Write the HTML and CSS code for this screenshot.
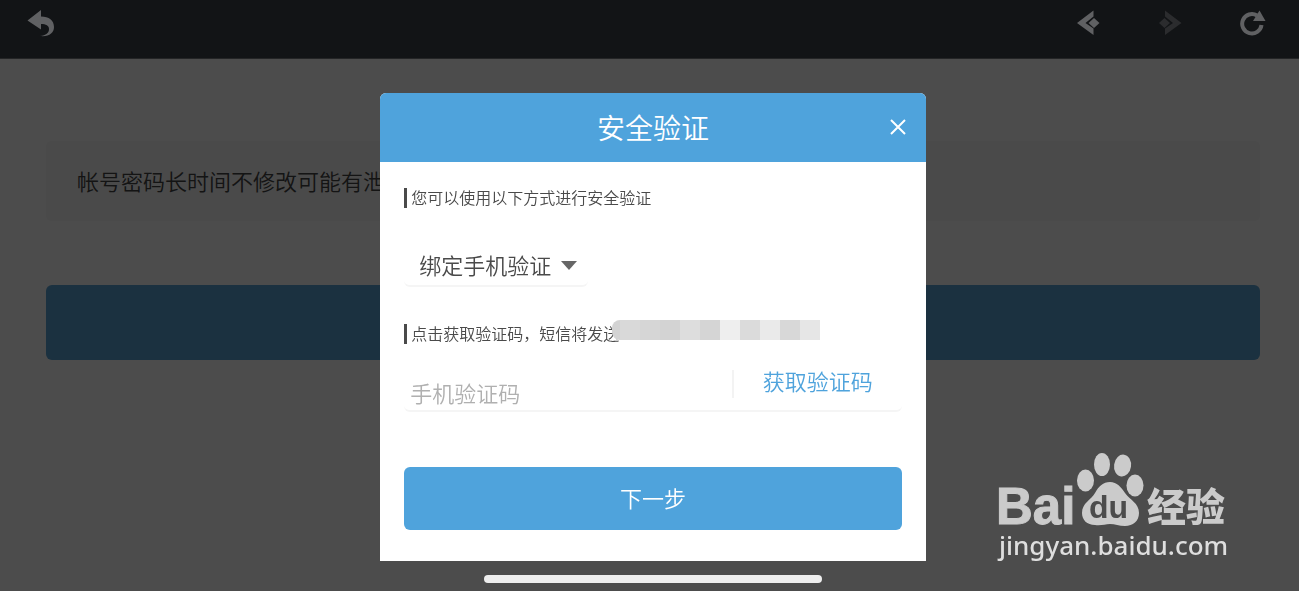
FILE: index.html
```html
<!DOCTYPE html>
<html lang="zh-CN">
<head>
  <meta charset="UTF-8">
  <meta name="viewport" content="width=device-width, initial-scale=1.0">
  <title>安全验证</title>
  <link rel="stylesheet" href="styles.css">
</head>
<body>
  <header class="topbar">
    <button class="icon-btn" type="button" aria-label="返回">
      <svg width="28" height="28" viewBox="0 0 28 28">
        <path d="M0.500 10.500L14 0V6.500C22 6.500 27 10.500 27 17C27 23 22 27 13 26C19 25.500 22 23 22 19C22 15.500 19 14 14 14V19.500Z"/>
      </svg>
    </button>
    <nav class="topbar-nav">
      <button class="icon-btn" type="button" aria-label="后退">
        <svg width="24" height="26" viewBox="0 0 24 26">
          <path d="M17.500 0.500V6.500L9.500 13L17.500 18.500V25L1 13Z"/>
          <path d="M18 8L23.500 13L18 18L12.500 13Z"/>
        </svg>
      </button>
      <button class="icon-btn" type="button" aria-label="前进" disabled>
        <svg width="24" height="26" viewBox="0 0 24 26">
          <path d="M7 0.500V6.500L15 13L7 18.500V25L23.500 13Z"/>
          <path d="M6.500 8L1 13L6.500 18L12 13Z"/>
        </svg>
      </button>
      <button class="icon-btn" type="button" aria-label="刷新">
        <svg width="26" height="26" viewBox="0 0 26 26">
          <path class="stroke" d="M17 5.500A9.700 9.700 0 1 0 21.500 15"/>
          <path d="M19.500 0.500L25.500 11H13Z"/>
        </svg>
      </button>
    </nav>
  </header>

  <main class="page">
    <p class="notice">帐号密码长时间不修改可能有泄</p>
    <button class="page-btn" type="button" aria-label="修改密码"></button>
  </main>

  <div class="mask">
    <section class="dialog" role="dialog" aria-labelledby="dialogTitle">
      <div class="dialog-head">
        <h1 id="dialogTitle">安全验证</h1>
        <button class="close" type="button" aria-label="关闭">
          <svg width="16" height="16" viewBox="0 0 16 16">
            <path d="M1 1L15 15M15 1L1 15"/>
          </svg>
        </button>
      </div>

      <form class="dialog-body">
        <label class="tip" for="method">您可以使用以下方式进行安全验证</label>
        <div class="select-box">
          <select id="method">
            <option>绑定手机验证</option>
          </select>
          <svg class="arrow" width="16" height="9" viewBox="0 0 16 9">
            <path d="M0 0H16L8 9Z"/>
          </svg>
        </div>

        <label class="tip" for="code">点击获取验证码，短信将发送<span class="mosaic"></span></label>
        <div class="code-row">
          <input id="code" type="text" placeholder="手机验证码">
          <button class="get-code" type="button">获取验证码</button>
        </div>

        <button class="next" type="button">下一步</button>
      </form>
    </section>
  </div>

  <!-- Baidu logo -->
  <svg class="watermark" width="250" height="120" viewBox="0 0 250 120">
    <text class="wm-bai" x="6" y="72">Bai</text>
    <ellipse cx="95.500" cy="28.500" rx="8.500" ry="11"/>
    <ellipse cx="112" cy="12.500" rx="8" ry="11.500"/>
    <ellipse cx="132.500" cy="13.500" rx="8.500" ry="11" transform="rotate(8 132 14)"/>
    <ellipse cx="145" cy="33.500" rx="8.500" ry="11"/>
    <path d="M120 30C127 30 131 35 135 41C140 48 149 51 149 61C149 69 143 74 135 74C129 74 125 72 120 72C115 72 111 74 105 73C97 73 92 68 92 61C92 51 101 48 105 41C109 34 113 30 120 30Z"/>
    <text class="wm-du" x="99" y="66">du</text>
    <text class="wm-cn" x="157" y="69">经验</text>
    <text class="wm-url" x="9" y="103">jingyan.baidu.com</text>
  </svg>

  <div class="home-bar"></div>
</body>
</html>
```
FILE: styles.css
```css
* {
  box-sizing: border-box;
}

body {
  margin: 0;
  min-height: 100vh;
  background: #fdfdfd;
  color: #4a4a4a;
  font-family: "Noto Sans CJK SC", sans-serif;
  font-size: 22px;
  font-weight: 350;
  overflow: hidden;
}

button,
input,
select {
  margin: 0;
  padding: 0;
  border: none;
  background: none;
  color: inherit;
  font: inherit;
}

button {
  cursor: pointer;
}

/* top bar */
.topbar {
  position: relative;
  z-index: 2;
  display: flex;
  justify-content: space-between;
  height: 59px;
  padding: 10px 33px 0 27px;
  background: #121416;
  border-bottom: 1px solid #242526;
}

.topbar-nav {
  display: flex;
  gap: 58px;
}

.icon-btn {
  height: 26px;
}

.icon-btn svg {
  display: block;
  fill: #606163;
}

.icon-btn:disabled svg {
  fill: #2b2c2e;
}

.icon-btn .stroke {
  fill: none;
  stroke: #606163;
  stroke-width: 4;
}

/* page under the mask */
.page {
  padding: 82px 39px 0 46px;
}

.notice {
  margin: 0 0 64px;
  padding: 23px 31px 25px;
  border-radius: 6px;
  background: #f7f7f7;
  color: #444;
  line-height: 32px;
}

.page-btn {
  display: block;
  width: 100%;
  height: 75px;
  border-radius: 6px;
  background: #5aa3d5;
}

.mask {
  position: fixed;
  inset: 0;
  z-index: 1;
  display: flex;
  justify-content: center;
  align-items: flex-start;
  padding: 93px 0 0 7px;
  background: rgba(0, 0, 0, 0.7);
}

/* dialog */
.dialog {
  width: 42vw;
  min-width: 320px;
  border-radius: 6px 6px 0 0;
  background: #fff;
  overflow: hidden;
}

.dialog-head {
  position: relative;
  height: 69px;
  background: #4fa3dc;
  color: #fff;
  text-align: center;
}

.dialog-head h1 {
  margin: 0;
  font-size: 28px;
  font-weight: 350;
  line-height: 69px;
}

.close {
  position: absolute;
  top: 26px;
  right: 20px;
  height: 16px;
}

.close svg {
  display: block;
  fill: none;
  stroke: #fff;
  stroke-width: 2;
}

.dialog-body {
  padding: 26px 24px 31px;
}

.tip {
  display: flex;
  align-items: center;
  height: 20px;
  padding: 0 0 2px 4px;
  border-left: 3px solid #4a4a4a;
  font-size: 16px;
  line-height: 20px;
}

.select-box {
  position: relative;
  width: 184px;
  margin: 36px 0 37px;
}

.select-box select {
  width: 100%;
  height: 43px;
  padding: 0 0 2px 15px;
  border-bottom: 2px solid #f5f5f5;
  border-radius: 6px;
  appearance: none;
}

.arrow {
  position: absolute;
  top: 17px;
  right: 11px;
  fill: #666;
  pointer-events: none;
}

/* hidden phone number */
.mosaic {
  position: relative;
  top: -3px;
  width: 208px;
  height: 20px;
  margin-left: -7px;
  border-radius: 8px 0 0 8px;
  background: linear-gradient(to right,
    #d3d3d3 8px, #d9d9d9 8px 28px, #d6d6d6 28px 48px, #d3d3d3 48px 68px,
    #dddddd 68px 88px, #d5d5d5 88px 108px, #eeeeee 108px 128px,
    #dbdbdb 128px 148px, #eaeaea 148px 168px, #d8d8d8 168px 188px, #e6e6e6 188px);
}

.code-row {
  display: flex;
  align-items: flex-start;
  height: 42px;
  margin: 26px 0 55px;
  border-bottom: 2px solid #f5f5f5;
  border-radius: 6px;
}

.code-row input {
  flex: 1;
  min-width: 0;
  height: 40px;
  padding: 4px 0 0 6px;
  outline: none;
}

.code-row input::placeholder {
  color: #b0b0b0;
}

.get-code {
  width: 170px;
  height: 28px;
  padding-bottom: 8px;
  border-left: 2px solid #f3f3f3;
  color: #4fa3dc;
  line-height: 20px;
}

.next {
  display: block;
  width: 100%;
  height: 63px;
  padding-bottom: 3px;
  border-radius: 6px;
  background: #4fa3dc;
  color: #fff;
}

/* watermark and home bar lie over everything */
.watermark {
  position: fixed;
  right: 59px;
  bottom: 19px;
  z-index: 3;
  fill: #cbcbcb;
}

.wm-bai {
  font: 700 51px "Liberation Sans", sans-serif;
  stroke: #cbcbcb;
  stroke-width: 1;
}

.wm-du {
  font: 700 32px "Liberation Sans", sans-serif;
  fill: #4c4c4c;
}

.wm-cn {
  font: 900 39px "Noto Sans CJK SC", sans-serif;
}

.wm-url {
  font: 500 26px "Noto Sans", sans-serif;
  fill: #dedede;
}

.home-bar {
  position: fixed;
  bottom: 8px;
  left: 7px;
  right: 0;
  z-index: 3;
  width: 26%;
  height: 8px;
  margin: 0 auto;
  border-radius: 4px;
  background: #eeeeee;
}
```
